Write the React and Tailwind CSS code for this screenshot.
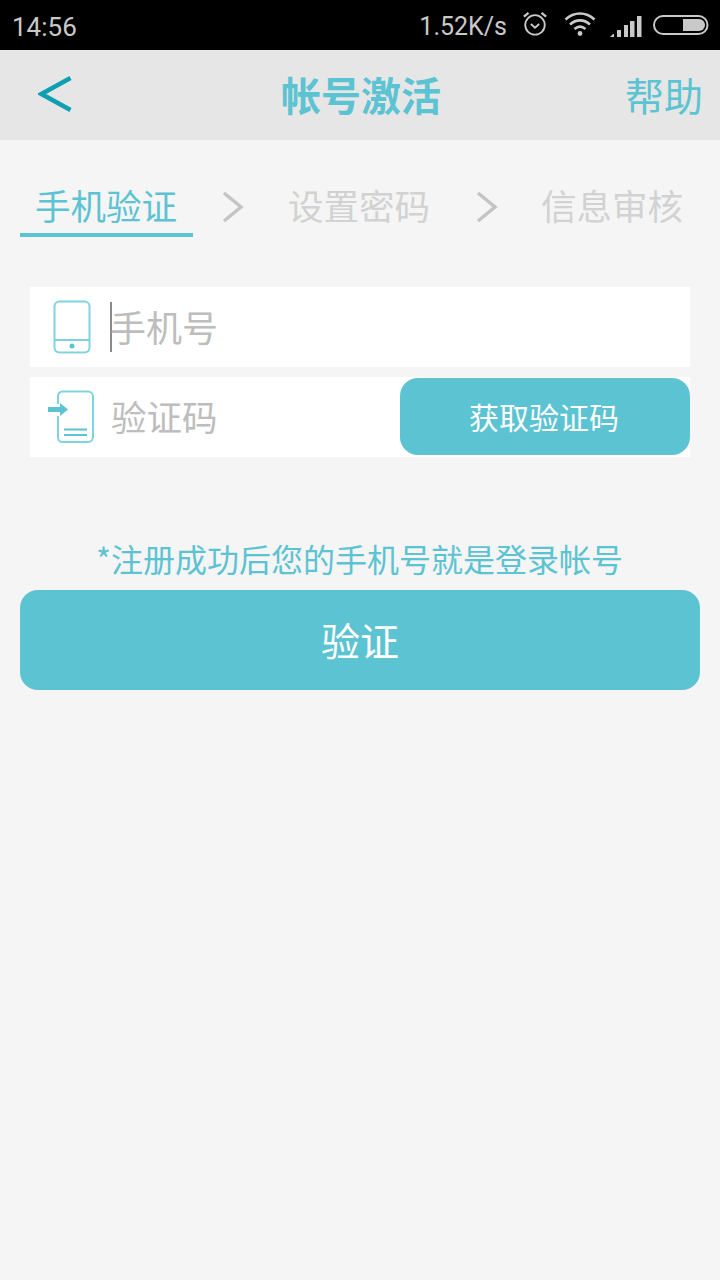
const cjk = 'font-["Noto_Sans_CJK_SC","Noto_Sans",sans-serif]';

function Chevron() {
  return (
    <svg width="22" height="32" viewBox="0 0 22 32" className="shrink-0">
      <path d="M2 2 L19 16 L2 30" fill="none" stroke="#c4c4c4" strokeWidth="3.5" />
    </svg>
  );
}

function StatusBar() {
  return (
    <div className='h-[50px] bg-black flex items-center pl-3 pr-[11px] text-[#c9c9c9] text-[26px] font-["Roboto",sans-serif] leading-none'>
      <span className="pt-[3px]">14:56</span>
      <span className="ml-auto pt-[3px] text-[25px]">1.52K/s</span>
      <svg width="26" height="28" viewBox="0 0 28 28" className="ml-[15px] mb-[2px]" fill="none" stroke="#c9c9c9" strokeWidth="2">
        <circle cx="14" cy="15" r="10.5" />
        <path d="M9.5 14 L14 18 L18.5 14" />
        <path d="M2 6 L7 2 M26 6 L21 2" strokeWidth="2.5" />
      </svg>
      <svg width="32" height="26" viewBox="0 0 32 26" className="ml-[16px] mb-[2px]" fill="none" stroke="#c9c9c9" strokeWidth="2.6">
        <path d="M1.5 8.5 C10 0.5 22 0.5 30.5 8.5" />
        <path d="M6 13.5 C12 8 20 8 26 13.5" />
        <path d="M10.5 18 C14 15 18 15 21.5 18" />
        <circle cx="16" cy="22.5" r="2.4" fill="#c9c9c9" stroke="none" />
      </svg>
      <svg width="32" height="22" viewBox="0 0 32 22" className="ml-[14px] mt-[2px]" fill="#c9c9c9">
        <path d="M0 22 L3 19 L4 19 L4 22 Z" />
        <rect x="7" y="15" width="4" height="7" />
        <rect x="14" y="10" width="4" height="12" />
        <rect x="20" y="6" width="4.5" height="16" />
        <rect x="27" y="1" width="4.5" height="21" />
      </svg>
      <svg width="56" height="20" viewBox="0 0 56 20" className="ml-[11px]">
        <rect x="1" y="1" width="53.5" height="18" rx="9" fill="none" stroke="#c9c9c9" strokeWidth="2" />
        <path d="M30 4 H46 A6 6 0 0 1 46 16 H30 Z" fill="#c9c9c9" />
      </svg>
    </div>
  );
}

function PhoneIcon() {
  return (
    <svg width="38" height="54" viewBox="0 0 38 54" fill="none" stroke="#7ed3e0" strokeWidth="2">
      <rect x="1.5" y="1.5" width="35" height="51" rx="5" />
      <path d="M1.5 40 H36.5" />
      <circle cx="19" cy="46" r="2.5" fill="#5cc3d2" stroke="none" />
    </svg>
  );
}

function SmsIcon() {
  return (
    <svg width="48" height="54" viewBox="0 0 48 54" fill="none">
      <path d="M11 14 V6 A4.5 4.5 0 0 1 15.5 1.5 H41 A5 5 0 0 1 46 6.5 V47 A5 5 0 0 1 41 52 H15.5 A4.5 4.5 0 0 1 11 47.5 V26" stroke="#7ed3e0" strokeWidth="2" />
      <path d="M1 17 H13 V13 L21 19.5 L13 26 V22 H1 Z" fill="#5cc3d2" />
      <path d="M17 39.5 H40 M17 45 H40" stroke="#5cc3d2" strokeWidth="2" />
    </svg>
  );
}

export default function App() {
  return (
    <div className={`${cjk} w-[720px] h-[1280px] bg-[#f5f5f5] overflow-hidden`}>
      <StatusBar />
      <div className="h-[90px] bg-[#e6e6e6] flex items-center relative">
        <svg width="34" height="36" viewBox="0 0 34 36" className="ml-[38px] mb-[2px]" fill="none">
          <path d="M32.5 2 L3.5 18 L32.5 34" stroke="#0f9fb2" strokeWidth="4.5" />
        </svg>
        <span className="absolute left-[281px] top-[18px] text-[40px] leading-[52px] font-bold text-[#5cc3d2] whitespace-nowrap">帐号激活</span>
        <span className="ml-auto mr-[17px] mb-[2px] text-[39px] leading-[52px] text-[#5cc3d2] whitespace-nowrap">帮助</span>
      </div>

      <div className="flex items-start pl-5 mt-[44px] h-[53px]">
        <div className="w-[173px] h-[53px] pr-[1px] border-b-4 border-[#5cc3d2] text-[35.5px] leading-[42px] text-[#5cc3d2] text-center whitespace-nowrap">手机验证</div>
        <div className="ml-[29px] mt-[7px]"><Chevron /></div>
        <div className="ml-[44px] text-[35.5px] leading-[42px] text-[#d2d2d2] whitespace-nowrap">设置密码</div>
        <div className="ml-[46px] mt-[7px]"><Chevron /></div>
        <div className="ml-[43px] text-[35.5px] leading-[42px] text-[#d2d2d2] whitespace-nowrap">信息审核</div>
      </div>

      <div className="mx-[30px] mt-[50px] flex flex-col gap-[10px]">
        <div className="h-[80px] bg-white flex items-center pl-[23px]">
          <PhoneIcon />
          <div className="ml-[19px] w-[2px] h-[50px] bg-[#8a8a8a]" />
          <span className="-ml-[2px] mb-[2px] text-[36px] leading-[46px] text-[#bdbdbd] whitespace-nowrap">手机号</span>
        </div>
        <div className="h-[80px] bg-white flex items-center pl-[17px] pr-0">
          <SmsIcon />
          <span className="ml-[16px] mb-[2px] text-[35.5px] leading-[46px] text-[#bdbdbd] whitespace-nowrap">验证码</span>
          <button className="ml-auto w-[290px] h-[77px] rounded-[18px] bg-[#5cc3d2] text-white text-[30px] leading-[40px] mb-[1px] pr-[2px] pb-[2px]">获取验证码</button>
        </div>
      </div>

      <div className="mt-[80px] pr-[1px] text-center text-[32px] leading-[42px] text-[#5cc3d2] whitespace-nowrap">*注册成功后您的手机号就是登录帐号</div>
      <button className="block mx-5 mt-[11px] w-[680px] h-[100px] rounded-[18px] bg-[#5cc3d2] text-white text-[39px] leading-[50px] pb-[2px]">验证</button>
    </div>
  );
}
